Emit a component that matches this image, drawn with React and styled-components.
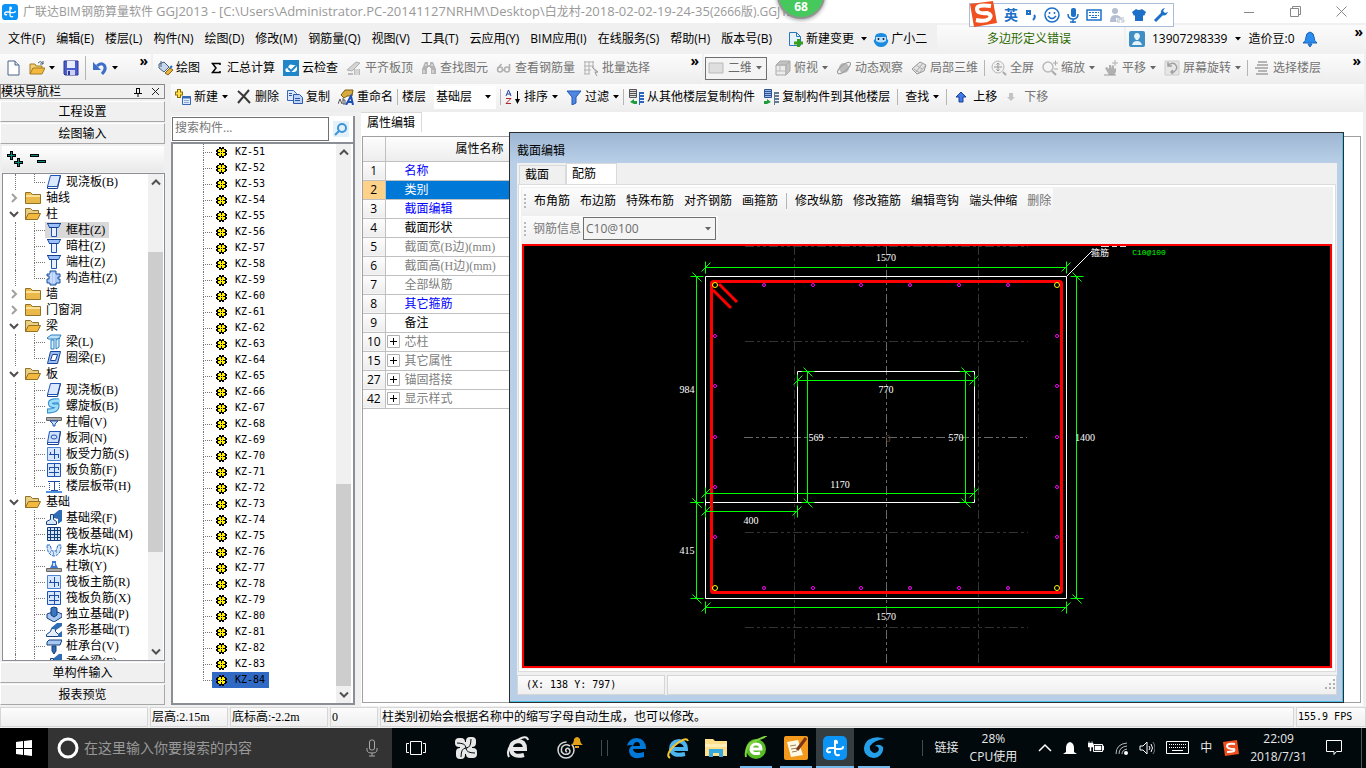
import React from 'react';
import styled, { createGlobalStyle, css } from 'styled-components';

const ui = '"Open Sans", "Noto Sans CJK SC", sans-serif';
const song = '"Liberation Serif", "Noto Sans CJK SC", serif';
const mono = '"DejaVu Sans Mono", monospace';

const GlobalStyle = createGlobalStyle`
  * {
    box-sizing: border-box;
  }
  body {
    margin: 0;
    background: #f0f0f0;
  }
  button, input, select {
    font: inherit;
    color: inherit;
    border: 0;
    padding: 0;
    margin: 0;
    background: none;
    border-radius: 0;
  }
  svg {
    display: block;
    flex: none;
  }
`;

const Page = styled.div`
  height: 100vh;
  display: flex;
  flex-direction: column;
  overflow: hidden;
  font: 12px/16px ${ui};
  color: #000;
  white-space: nowrap;
`;

/* ---------- title ---------- */

const TitleBar = styled.header`
  height: 23px;
  flex: none;
  display: flex;
  align-items: center;
  padding: 0 2px;
  background: #fff;
  color: #999;
`;

const TitleText = styled.h1`
  margin: 0 0 0 5px;
  flex: 1;
  min-width: 0;
  font: 12px/20px ${ui};
`;

const Path = styled.span`
  font-size: 13px;
`;

const WindowButton = styled.button`
  width: 46px;
  height: 22px;
  display: grid;
  place-items: center;
`;

const Ball = styled.div`
  position: absolute;
  top: -29px;
  left: 777px;
  width: 48px;
  height: 48px;
  border: 2px solid #8f958f;
  border-radius: 50%;
  background: #45c95d;
  box-shadow: 0 1px 4px #0006;
  color: #fff;
  font: bold 12px/14px ${ui};
  text-align: center;
  padding-top: 27px;
`;

const ImeBar = styled.div`
  position: absolute;
  top: 3px;
  right: 192px;
  height: 24px;
  padding: 0 4px 0 34px;
  display: flex;
  align-items: center;
  gap: 7px;
  border: 1px solid #a9bcd8;
  background: #fff;
  color: #1c70c8;
  font-weight: bold;
  font-size: 14px;
`;

const ImeLogo = styled.span`
  position: absolute;
  left: -1px;
  top: -4px;
`;

/* ---------- menu ---------- */

const MenuBar = styled.nav`
  height: 31px;
  flex: none;
  display: flex;
  align-items: center;
  background: #f0f0f0;
`;

const MenuItems = styled.div`
  display: flex;
  align-items: center;
  gap: 11px;
  padding-left: 8px;
`;

const MenuExtras = styled.div`
  display: flex;
  align-items: center;
  gap: 6px;
  padding-left: 16px;
`;

const MenuItem = styled.button`
  display: flex;
  align-items: center;
  gap: 2px;
`;

const MenuPanel = styled.div`
  height: 28px;
  flex: none;
  display: flex;
  align-items: center;
  gap: 7px;
  background: linear-gradient(#fbfbfb, #f0f0f0);
`;

const ErrorPanel = styled(MenuPanel)`
  width: 187px;
  margin-left: auto;
  margin-right: 2px;
  padding-left: 50px;
  color: #2d6a00;
`;

const AccountPanel = styled(MenuPanel)`
  width: 240px;
  padding: 0 3px 0 3px;
`;

/* ---------- tool bars ---------- */

const ToolRow = styled.div`
  flex: none;
  display: flex;
  height: 30px;
`;

const ToolGroup = styled.div`
  flex: ${({ $grow }) => ($grow ? '1' : 'none')};
  width: ${({ $width }) => ($width ? `${$width}px` : 'auto')};
  height: ${({ $height }) => $height || 30}px;
  display: flex;
  align-items: center;
  gap: 8px;
  padding: 0 3px 2px ${({ $start }) => $start || 4}px;
  margin-right: 2px;
  background: linear-gradient(#fcfcfc, #ededed);
`;

const Tool = styled.button`
  display: flex;
  align-items: center;
  gap: 3px;
  color: ${({ disabled }) => (disabled ? '#737373' : '#000')};
`;

const Separator = styled.span`
  width: 1px;
  height: ${({ $tall }) => ($tall ? 24 : 16)}px;
  flex: none;
  margin: 0 -${({ $pull }) => $pull || 2}px;
  background: #b5b5b5;
`;

const More = styled.button`
  margin-left: auto;
  align-self: flex-start;
  font: bold 14px/14px ${ui};
`;

const SelectBox = styled.label`
  display: flex;
  align-items: center;
  gap: 4px;
  width: ${({ $width }) => $width}px;
  height: 23px;
  padding: 0 4px 0 ${({ $framed }) => ($framed ? 2 : 1)}px;
  background: ${({ $framed }) => ($framed ? '#f4f4f4' : '#fff')};
  border: 1px solid ${({ $framed }) => ($framed ? '#6f6f6f' : '#fff')};
  color: ${({ $framed }) => ($framed ? '#6b6b6b' : '#000')};
  select {
    appearance: none;
    flex: 1;
    min-width: 0;
    outline: 0;
  }
`;

/* ---------- work area ---------- */

const Work = styled.main`
  flex: 1;
  min-height: 0;
  display: flex;
  gap: 6px;
`;

const NavPanel = styled.aside`
  width: 165px;
  flex: none;
  display: flex;
  flex-direction: column;
  padding-bottom: 1px;
  gap: 1px;
`;

const NavHead = styled.div`
  height: 15px;
  flex: none;
  display: flex;
  align-items: center;
  border: 1px solid #8a8a8a;
  margin-bottom: 1px;
  line-height: 13px;
  svg:first-of-type {
    margin-left: auto;
  }
  svg + svg {
    margin: 0 4px 0 8px;
  }
`;

const NavButton = styled.button`
  height: 21px;
  flex: none;
  border: 1px solid #a8a8a8;
  border-left-color: #fff;
  border-top-color: #fff;
  background: #f0f0f0;
  line-height: 18px;
`;

const NavTools = styled.div`
  height: 26px;
  flex: none;
  display: flex;
  align-items: center;
  gap: 7px;
  margin: 1px 1px 0 2px;
  padding-left: 5px;
  background: linear-gradient(#fff, #e9e9e9);
`;

const TreeBox = styled.div`
  flex: 1;
  min-height: 0;
  display: flex;
  overflow: hidden;
  margin-left: ${({ $inset }) => ($inset ? 2 : 0)}px;
  border: ${({ $inset }) => ($inset ? 1 : 2)}px solid #8b8e95;
  background: #fff;
`;

const TreeList = styled.ul`
  flex: 1;
  min-width: 0;
  overflow: hidden;
  list-style: none;
  margin: 0;
  padding: 0 0 0 ${({ $indent }) => $indent}px;
  font: 12px/16px ${song};
`;

const TreeRow = styled.li`
  height: 16px;
  display: flex;
  align-items: center;
`;

const FolderRow = styled(TreeRow)`
  gap: 5px;
  svg:first-child {
    margin: 0 1px 0 -6px;
  }
`;

const dotted = '1px dotted #777';

const Guide = styled.span`
  width: 19px;
  height: 16px;
  border-left: ${dotted};
`;

const Branch = styled.span`
  width: ${({ $width }) => $width || 11}px;
  height: 16px;
  display: flex;
  flex-direction: column;
  &::before {
    content: '';
    height: 8px;
    border-left: ${dotted};
    border-bottom: ${dotted};
  }
  &::after {
    content: '';
    height: 8px;
    border-left: ${({ $last }) => ($last ? '0' : dotted)};
  }
`;

const Leaf = styled.span`
  display: flex;
  align-items: center;
  gap: 4px;
  height: 16px;
  padding: 0 4px 0 1px;
  ${({ $selected }) =>
    $selected &&
    css`
      background: #d9d9d9;
    `}
`;

const KzLeaf = styled.span`
  display: flex;
  align-items: center;
  gap: 8px;
  height: 16px;
  padding: 0 4px;
  font: 10px/16px ${mono};
  background: ${({ $selected }) => ($selected ? '#316ac5' : 'none')};
`;

const Scroll = styled.div`
  width: 15px;
  flex: none;
  display: flex;
  flex-direction: column;
  align-items: center;
  background: #f0f0f0;
  margin-right: ${({ $gap }) => $gap || 1}px;
  svg {
    height: 17px;
  }
`;

const ScrollSpace = styled.span`
  flex: ${({ $size }) => $size};
`;

const Thumb = styled.span`
  flex: ${({ $size }) => $size};
  width: 100%;
  background: #cdcdcd;
`;

const Right = styled.div`
  flex: 1;
  min-width: 0;
  display: flex;
  flex-direction: column;
`;

const Columns = styled.div`
  flex: 1;
  min-height: 0;
  display: flex;
`;

const ListPanel = styled.section`
  width: 184px;
  flex: none;
  display: flex;
  flex-direction: column;
  margin: 4px 6px 1px 0;
`;

const SearchRow = styled.div`
  height: 26px;
  flex: none;
  display: flex;
  align-items: center;
  background: #fff;
  border-right: 2px solid #8b8e95;
  button {
    margin: 0 auto;
  }
`;

const SearchInput = styled.input`
  width: 157px;
  height: 24px;
  margin-left: 1px;
  padding: 0 2px 4px;
  border: 1px solid #707070;
  &::placeholder {
    color: #777;
    opacity: 1;
  }
`;

const PropPanel = styled.section`
  position: relative;
  flex: 1;
  min-width: 0;
  display: flex;
  flex-direction: column;
  background: #fff;
  margin-right: 3px;
`;

const PropTab = styled.button`
  width: 61px;
  height: 20px;
  border-right: 1px solid #d9d9d9;
  border-top: 1px solid #d9d9d9;
`;

const GridBox = styled.div`
  flex: 1;
  margin: 4px 2px 3px 1px;
  border: 1px solid #a0a0a0;
  min-height: 0;
`;

const PropTable = styled.table`
  border-collapse: collapse;
  table-layout: fixed;
  width: 420px;
  font: 12px/16px ${song};
  th,
  td {
    padding: 0;
    border: 1px solid #c0c0c0;
    border-left: 0;
    border-top: 0;
    text-align: left;
    font-weight: normal;
  }
`;

const HeadCell = styled.th`
  height: 24px;
  background: linear-gradient(#fdfdfd, #ededed);
  && {
    text-align: right;
    padding-right: 5px;
  }
`;

const NumberCell = styled.th`
  height: 19px;
  font-family: ${ui};
  background: ${({ $active }) => ($active ? '#ffd28a' : 'linear-gradient(#fdfdfd, #ededed)')};
  && {
    text-align: center;
  }
`;

const NameCell = styled.td`
  color: ${({ $tone }) => $tone};
  background: ${({ $active }) => ($active ? '#0078d7' : '#fff')};
`;

const NameInner = styled.div`
  display: flex;
  align-items: center;
  gap: 5px;
  height: 18px;
  padding-left: ${({ $plus }) => ($plus ? 1 : 19)}px;
`;

/* ---------- section dialog ---------- */

const Dialog = styled.section`
  position: absolute;
  inset: 20px 19px 3px 148px;
  display: flex;
  flex-direction: column;
  padding: 0 6px 7px 7px;
  border: 1px solid #2e2e2e;
  background: linear-gradient(#9db6d2, #b9cfe8 30px);
  box-shadow: inset -1px -1px #4cc3e8;
`;

const DialogTitle = styled.h2`
  margin: 0;
  height: 30px;
  flex: none;
  font: 12px/36px ${ui};
`;

const DialogBody = styled.div`
  flex: 1;
  min-height: 0;
  display: flex;
  flex-direction: column;
  background: #f0f0f0;
`;

const Tabs = styled.div`
  height: 21px;
  flex: none;
  display: flex;
  align-items: flex-end;
  padding-left: 2px;
`;

const Tab = styled.button`
  width: ${({ $on }) => ($on ? 51 : 47)}px;
  height: ${({ $on }) => ($on ? 21 : 19)}px;
  padding: 0 0 1px 5px;
  text-align: left;
  border: 1px solid #d9d9d9;
  border-bottom: 0;
  background: ${({ $on }) => ($on ? '#fff' : '#f0f0f0')};
`;

const TabPage = styled.div`
  flex: 1;
  min-height: 0;
  display: flex;
  flex-direction: column;
  margin: 0 1px;
  padding: 3px;
  border: 1px solid #dcdcdc;
  background: #f0f0f0;
  box-shadow: inset 2px 2px #fff, inset -2px -2px #fff;
`;

const DialogTools = styled.div`
  height: 28px;
  flex: none;
  display: flex;
  align-items: center;
  align-self: flex-start;
  gap: ${({ $tight }) => ($tight ? 2 : 10)}px;
  padding: ${({ $tight }) => ($tight ? '0 2px 3px' : '0 2px 3px')};
  background: linear-gradient(#fcfcfc, #efefef);
  color: ${({ $tight }) => ($tight ? '#7a7a7a' : '#000')};
`;

const Grip = styled.span`
  width: 2px;
  height: 14px;
  margin-right: ${({ $tight }) => ($tight ? 5 : -2)}px;
  background: repeating-linear-gradient(#b8b8b8 0 2px, transparent 2px 4px);
`;

const Canvas = styled.div`
  flex: 1;
  min-height: 0;
  background: #000;
  border: 2px solid #f00;
  svg {
    width: 100%;
    height: 100%;
  }
`;

const DialogStatus = styled.div`
  height: 20px;
  flex: none;
  display: flex;
  gap: 2px;
  margin-top: 3px;
`;

const StatusCell = styled.span`
  flex: ${({ $width }) => ($width ? 'none' : '1')};
  width: ${({ $width }) => ($width ? `${$width}px` : 'auto')};
  height: 20px;
  padding-left: ${({ $pad }) => $pad || 1}px;
  border: 1px solid #d6d6d6;
  background: linear-gradient(#fcfcfc, #efefef);
  font: 12px/18px ${song};
  display: flex;
  justify-content: space-between;
  align-items: center;
`;

const Mono = styled.span`
  font: 10px/16px ${mono};
`;

const StatusBar = styled.footer`
  height: 22px;
  flex: none;
  display: flex;
  gap: 2px;
  padding: 1px 0;
`;

/* ---------- taskbar ---------- */

const TaskBar = styled.footer`
  height: 40px;
  flex: none;
  display: flex;
  background: #01090c;
  color: #e8e8e8;
`;

const Start = styled.button`
  width: 48px;
  display: grid;
  place-items: center;
  background: #000;
`;

const Cortana = styled.label`
  width: 344px;
  display: flex;
  align-items: center;
  gap: 4px;
  padding: 0 14px 0 8px;
  background: #333;
  font-size: 14px;
  input {
    flex: 1;
    min-width: 0;
    outline: 0;
    &::placeholder {
      color: #999;
      opacity: 1;
    }
  }
`;

const Launchers = styled.div`
  display: flex;
  padding-left: 4px;
`;

const Launcher = styled.button`
  width: ${({ $width }) => $width || 40}px;
  display: grid;
  place-items: center;
  background: ${({ $active }) => ($active ? '#363d40' : 'none')};
  box-shadow: ${({ $running }) => ($running ? 'inset 0 -2px #76b9ed' : 'none')};
  border: 0 solid transparent;
  border-width: 0 ${({ $active }) => ($active ? 0 : 4)}px;
  background-clip: padding-box;
`;

const TaskSeparator = styled.span`
  width: 1px;
  height: 16px;
  align-self: center;
  margin: 0 ${({ $gap }) => $gap}px;
  background: #444b4e;
`;

const Tray = styled.div`
  flex: 1;
  display: flex;
  align-items: center;
  justify-content: flex-end;
  gap: 11px;
  padding-right: 4px;
`;

const TrayText = styled.div`
  text-align: center;
  font: 12px/18px ${ui};
`;

const Edge = styled.span`
  width: 1px;
  height: 40px;
  margin-left: 8px;
  background: #555;
`;

/* ---------- drawings ---------- */

const Svg = ({ w = 16, h = w, box, children }) => (
  <svg width={w} height={h} viewBox={box || `0 0 ${w} ${h}`} fill="none" aria-hidden="true">
    {children}
  </svg>
);

const Caret = ({ color = '#000' }) => (
  <Svg w={7} h={4}>
    <path d="M1 0h6L4 3.500z" fill={color} />
  </Svg>
);

const Chevron = ({ dir }) => {
  const d = { up: 'M1 7l4-4 4 4', down: 'M1 3l4 4 4-4', right: 'M3 1l4 4-4 4' };
  return (
    <Svg w={10} box="0 0 10 10">
      <path d={d[dir]} stroke={dir === 'right' ? '#a0a0a0' : '#505050'} strokeWidth="2" />
    </Svg>
  );
};

const Clover = ({ size }) => (
  <Svg w={size} box="0 0 24 24">
    <rect width="24" height="24" rx="5" fill="#0b93f6" />
    <path
      d="M14 7q0-3-2-2v11q0 4 4 3M12 12H7q-3 0-3 3 1 2 3 1M12 13h5q3 0 3-2"
      stroke="#fff"
      strokeWidth="2"
      strokeLinecap="round"
    />
  </Svg>
);

const icons = {
  doc: (
    <>
      <path d="M3 1h7l4 4v10H3z" fill="#fff" stroke="#4b6488" />
      <path d="M10 1v4h4" stroke="#4b6488" fill="#cfdcf0" />
    </>
  ),
  open: (
    <>
      <path d="M1 14V4h5l1 2h6v2" fill="#f3cf74" stroke="#a57c20" />
      <path d="M1 14l3-6h12l-3 6z" fill="#f2b93c" stroke="#a57c20" />
      <path d="M9 3q3-3 5 1m0-3v3h-3" stroke="#44607f" />
    </>
  ),
  save: (
    <>
      <path d="M1 1h14v14H2l-1-1z" fill="#4c5ecb" stroke="#2b3796" />
      <path d="M4 1h8v7H4z" fill="#e8ecff" />
      <path d="M4 10h8v5H4z" fill="#cdd2f0" />
      <path d="M5 11h2v4H5z" fill="#2b3796" />
    </>
  ),
  undo: (
    <>
      <path d="M5 6q4-4 7-1 3 4-2 9" stroke="#3d6ec9" strokeWidth="3" />
      <path d="M1 2v8h8z" fill="#3d6ec9" />
    </>
  ),
  paint: (
    <>
      <path d="M2 4l5-2 5 5-5 5-5-4z" fill="#c7d7ec" stroke="#47607e" />
      <path d="M4 1v6" stroke="#47607e" />
      <path d="M8 13l5-5 3 2-5 5z" fill="#e7b53c" stroke="#86631a" />
      <path d="M13 8l2-2" stroke="#2c6ac4" strokeWidth="2" />
    </>
  ),
  sigma: <path d="M12 5V3.500H4.500L8 8l-3.500 4.500H12V11" stroke="#000" strokeWidth="1.500" />,
  cloud: (
    <>
      <rect width="16" height="16" fill="#1f87c9" />
      <path d="M3 12q-2-4 2-4 1-5 5-3 5 0 4 5-1 2-3 2z" fill="#fff" />
      <path d="M5 8l3 3 5-5" stroke="#1f87c9" strokeWidth="2" />
    </>
  ),
  align: (
    <>
      <path d="M1 10l9-8 4 1-8 8z" fill="#d4d4d4" stroke="#b0b0b0" />
      <path d="M2 13h5v2H2zM8 9h6v6H8z" fill="#bbb" />
      <path d="M10 9v6m2-6v6" stroke="#eee" />
    </>
  ),
  binoculars: (
    <>
      <path d="M1 9l3-7h3v6H6v6H1zM15 9l-3-7H9v6h1v6h5z" fill="#b4b4b4" />
      <path d="M3 10v3m9-3v3M5 4v2m6-2v2" stroke="#efefef" />
      <path d="M6 6h4" stroke="#b4b4b4" strokeWidth="2" />
    </>
  ),
  glasses: (
    <g stroke="#b0b0b0" strokeWidth="1.500">
      <circle cx="4" cy="9.500" r="2.500" />
      <circle cx="11" cy="9.500" r="2.500" />
      <path d="M1.500 9l4-5m8 6V4M6 10h3" />
    </g>
  ),
  batch: (
    <>
      <path d="M1 2h10M1 6h10M1 10h7M2 1v13M6 1v13M10 1v7M1 14h6" stroke="#b0b0b0" />
      <path d="M9 7l6 5-3 .500L14 16" fill="#ccc" stroke="#999" />
    </>
  ),
  plane: <path d="M1 3h14v10H1z" fill="#dedede" stroke="#bbb" />,
  cube: (
    <>
      <path d="M1 5h10v10H1z" fill="#ececec" stroke="#aaa" />
      <path d="M1 5l4-4h10l-4 4zM11 5l4-4v10l-4 4z" fill="#c2c2c2" stroke="#aaa" />
      <path d="M5 5v6H1m4 0h6" stroke="#bbb" />
    </>
  ),
  orbit: (
    <>
      <circle cx="8" cy="8" r="5" fill="#bbb" />
      <ellipse cx="8" cy="8" rx="8" ry="3" transform="rotate(-40 8 8)" stroke="#9b9b9b" />
    </>
  ),
  local3d: (
    <>
      <path d="M1 9l8-7 6 3-2 6-7 3z" fill="#e3e3e3" stroke="#999" />
      <path d="M5 5l6 4m-8 0l6 4m3-10l-7 9m10-7l-7 8" stroke="#aaa" />
    </>
  ),
  full: (
    <>
      <circle cx="7" cy="7" r="6" stroke="#b8b8b8" fill="#f0f0f0" />
      <path d="M7 3v8M3 7h8M5.500 4.500L7 3l1.500 1.500M5.500 9.500L7 11l1.500-1.500" stroke="#999" />
      <path d="M12 12l3 3" stroke="#aaa" strokeWidth="2" />
    </>
  ),
  zoomer: (
    <>
      <circle cx="6" cy="7" r="5" stroke="#bababa" strokeWidth="1.500" />
      <path d="M10 11l4 4" stroke="#aaa" strokeWidth="2" />
      <path d="M11 3h5m-2.500-2.500v5M12 9h4" stroke="#aaa" />
    </>
  ),
  hand: (
    <>
      <path d="M2 8l2-1 2 2V5h2v4l1-4 2 1v3l2-1v4l-2 3H6z" fill="#b0b0b0" />
      <path d="M12 0v6M9 3h6" stroke="#b0b0b0" />
      <path d="M1 15h12" stroke="#999" />
    </>
  ),
  rotate: (
    <>
      <path d="M1 1h14v14H1z" fill="#e6e6e6" stroke="#ccc" />
      <path d="M4 6q3-4 7-2 4 4-1 8H7M4 2v4h4M9 10l-2 2 2 2" stroke="#a0a0a0" strokeWidth="1.500" />
    </>
  ),
  floors: <path d="M4 2h9M3 5h11M1 8h5M6 8h8M4 11h9M2 14h12" stroke="#b4b4b4" strokeWidth="2" />,
  create: (
    <>
      <path d="M7.500 7.500h8v8h-8z" fill="#dfeafa" stroke="#3567b5" />
      <path d="M7 8.500h9" stroke="#3567b5" strokeWidth="2" />
      <path d="M9 11.500h5m-5 2h5" stroke="#8aa9db" />
      <path d="M4 0v9M0 4.500h8" stroke="#8b6d00" strokeWidth="4" />
      <path d="M4 1v7M1 4.500h6" stroke="#ffe04c" strokeWidth="2" />
    </>
  ),
  cross: <path d="M2 2q6 5 12 12M13 1L2 14" stroke="#3a3a3a" strokeWidth="2" />,
  copy: (
    <>
      <path d="M.500 1.500h6l3 3v7h-9z" fill="#dce8fb" stroke="#3b68b6" />
      <path d="M6.500 5.500h6l3 3v6h-9z" fill="#bcd2f6" stroke="#2b57a6" />
      <path d="M2 4.500h3M2 6.500h3M8 9.500h5m-5 2h5" stroke="#2b57a6" />
    </>
  ),
  rename: (
    <>
      <path d="M3 6l4-5h8l-1 6H9L6 9z" fill="#d8ab3e" stroke="#7c5c12" />
      <path d="M0 15l2-5 2 5m1-6v6h2v-4H5" stroke="#555" />
      <path d="M8 16l5-9 2 9m-5-3h5" stroke="#1f4fb8" strokeWidth="2" />
    </>
  ),
  sort: (
    <>
      <path d="M1 7l2.500-6L6 7M2 5h4" stroke="#2447a8" />
      <path d="M1 9.500h5L1 14.500h5" stroke="#b02828" />
      <path d="M12.500 2v11" stroke="#000" />
      <path d="M10 10h5l-2.500 5z" fill="#000" />
    </>
  ),
  filter: <path d="M1 2h14L10 8v6l-4 2V8z" fill="#4f87e0" stroke="#2359b3" />,
  copyFrom: (
    <>
      <path d="M1.500.500h7v8h-7z" fill="#ddd" stroke="#555" />
      <path d="M2 2.500h6M2 4.500h6M2 6.500h6" stroke="#555" />
      <path d="M11 4h5M11 7h5M11 10h5M11 13h5" stroke="#2b66bd" strokeWidth="2" />
      <path d="M11.500 3v13" stroke="#2b66bd" />
      <path d="M2 13l4-3v2h3v3H6z" fill="#1c9c3b" />
    </>
  ),
  copyTo: (
    <>
      <path d="M1.500.500h7v8h-7z" fill="#9fbce8" stroke="#2c5394" />
      <path d="M2 2.500h6M2 4.500h6M2 6.500h6" stroke="#2c5394" />
      <path d="M11 4h5M11 7h5M11 10h5M11 13h5" stroke="#62788f" strokeWidth="2" />
      <path d="M11.500 3v13" stroke="#62788f" />
      <path d="M8 13l-4-3v2H1v3h3z" fill="#1c9c3b" />
    </>
  ),
  up: <path d="M7 3l5 5H9v5H5V8H2z" fill="#3f78e8" stroke="#1c3f94" />,
  down: <path d="M6 12l4-4H8V4H4v4H2z" fill="#c4c4c4" />,
  change: (
    <>
      <path d="M1.500 1.500h7l4 4v9h-11z" fill="#e6f2fc" stroke="#2c78bd" />
      <path d="M8.500 1.500v4h4" stroke="#2c78bd" />
      <path d="M10.500 8v8M6 12h9" stroke="#35a01e" strokeWidth="3" />
    </>
  ),
  mascot: (
    <>
      <path d="M8 2q7 0 6 6 2 1 1 3-2 5-7 5t-7-5q-1-2 1-3-1-6 6-6z" fill="#1a8be0" />
      <path d="M3 6h10v4q-5 3-10 0z" fill="#bfe2fa" />
      <path d="M5.500 7v2m5-2v2" stroke="#124" strokeWidth="1.500" />
    </>
  ),
  search: (
    <>
      <rect width="16" height="16" fill="#e4f1fb" />
      <circle cx="9" cy="7" r="4" stroke="#3d94d6" strokeWidth="2" />
      <path d="M6 10l-4 4" stroke="#3d94d6" strokeWidth="2" />
    </>
  ),
  folder: (
    <>
      <path d="M.500 2.500h5l2 2h8v9H.500z" fill="#e9b94a" stroke="#937125" />
      <path d="M1 5h14v2H1z" fill="#fbe09a" />
    </>
  ),
  folderOpen: (
    <>
      <path d="M.500 13.500v-11h5l2 2h6v3" fill="#e9cf86" stroke="#937125" />
      <path d="M.500 13.500l3-6h12l-3 6z" fill="#f3b93f" stroke="#937125" />
    </>
  ),
  slab: (
    <>
      <path d="M4.500 1.500h10l-3 11h-10z" fill="#dbe8ff" stroke="#1d54b5" />
      <path d="M1.500 12.500v2h10l3-13" stroke="#17408c" />
    </>
  ),
  column: (
    <>
      <path d="M1.500 1.500h13l-2 4h-9z" fill="#9cc0fa" stroke="#1d54b5" />
      <path d="M5.500 5.500h5v9h-5z" fill="#e6f0ff" stroke="#1d54b5" />
      <path d="M1 1.500h14M3 5.500h9" stroke="#17408c" />
    </>
  ),
  structural: (
    <>
      <path d="M4 1h6v3h4v3h-2v2h2v4h-4v2H4v-2H1V9h2V6H1V4h3z" fill="#a9c8fb" stroke="#1d4e99" />
      <path d="M5 3v10m3-10v10" stroke="#eaf2ff" />
    </>
  ),
  beam: (
    <>
      <path d="M1 4l4-3h10l-2 4H2z" fill="#bfe3fb" stroke="#2a7fc0" />
      <path d="M5 6h3v9H5zM10 6l3-2v9l-3 2z" fill="#d9f0ff" stroke="#2a7fc0" />
    </>
  ),
  ring: (
    <>
      <path d="M4.500 1.500h10l-3 12h-10z" fill="#9dbdf0" stroke="#17439a" />
      <path d="M6.500 4.500h5l-2 6h-5z" fill="#fff" stroke="#17439a" />
    </>
  ),
  spiral: (
    <>
      <path d="M13 3Q2 2 5 7q2 1 6 1 0 5-10 5" stroke="#2f8fd0" strokeWidth="5" />
      <path d="M14 3Q2 2 5 7q2 1 6 1 0 5-9 5" stroke="#9fdcfa" strokeWidth="3" />
    </>
  ),
  cap: (
    <>
      <path d="M.500 3.500h15v3H.500z" fill="#aaa" stroke="#666" />
      <path d="M4 7h8l-3 3v2H7v-2z" fill="#d5e5ff" stroke="#1d54b5" />
    </>
  ),
  hole: (
    <>
      <path d="M3.500 1.500h11l-2 11h-11z" fill="#cfe0ff" stroke="#1d54b5" />
      <path d="M1.500 12.500v2h11l2-13" stroke="#17408c" />
      <ellipse cx="8" cy="7" rx="3" ry="2" stroke="#1d54b5" />
    </>
  ),
  bar: (
    <>
      <path d="M1.500 1.500h13v13h-13z" fill="#d7e7ff" stroke="#4f83d4" />
      <path d="M3 8.500h10M8.500 3v10M4.500 6v3M12.500 8v4" stroke="#1d4ea5" />
    </>
  ),
  bar2: (
    <>
      <path d="M1.500 1.500h13v13h-13z" fill="#d7e7ff" stroke="#1d54b5" />
      <path d="M3 5.500h10M3 10.500h10M8.500 2v12M3.500 5v3M12.500 5v3" stroke="#1d4ea5" />
    </>
  ),
  strip: (
    <>
      <path d="M0 13h16v2H0z" fill="#4f8fe0" />
      <path d="M2 3.500h12M8.500 4v8M5 12.500h7" stroke="#1d4ea5" />
      <path d="M3.500 3v10m10-10v10" stroke="#1d4ea5" strokeDasharray="1 1" />
    </>
  ),
  foundBeam: (
    <>
      <path d="M.500 14.500v-3l4-2v-5h3v5l3 2v3z" fill="#d7e7fa" stroke="#153f7a" />
      <path d="M8 4l5-4h3v11l-4 3V9L8 8z" fill="#2f6cb6" />
    </>
  ),
  raft: (
    <path
      d="M1.500 1.500h13v13h-13zM4.500 4.500h7v7h-7zM1 4.500h14M1 8.500h14M1 11.500h14M4.500 1v14M8.500 1v14M11.500 1v14"
      fill="#cfe3f7"
      stroke="#123c7a"
    />
  ),
  pit: (
    <>
      <path d="M1 3h3l2 6h4l2-6h3q0 10-7 11Q1 13 1 3z" fill="#d5e6fb" stroke="#2b6bc0" strokeDasharray="3 1" />
      <path d="M4 10h1m2 1h1m2-1h1m-4 2h1" stroke="#2b6bc0" />
    </>
  ),
  pier: (
    <>
      <path d="M.500 10.500h15v3H.500z" fill="#aaa" stroke="#666" />
      <path d="M4 10l2-4V3h4v3l2 4z" fill="#3c78d4" />
      <path d="M7 5h2v3H7z" fill="#cfe0ff" />
    </>
  ),
  isolated: (
    <>
      <path d="M1 8l8-3 7 3v3l-8 5-7-4z" fill="#a7c8f2" stroke="#153f7a" />
      <path d="M5 2l3-1 3 1v7l-3 2-3-2z" fill="#3b77c0" stroke="#153f7a" />
    </>
  ),
  stripFound: (
    <>
      <path d="M.500 14.500v-2l4-3 1-3h4v3l3 3v2z" fill="#e2eefc" stroke="#153f7a" />
      <path d="M5 6l6-5h5v3l-6 4zM12 12l4-3v6h-3z" fill="#2f6cb6" />
    </>
  ),
  pile: (
    <>
      <path d="M1 4l2-2h13l-2 5H1z" fill="#a7c8f2" stroke="#153f7a" />
      <path d="M6 8h4v5l-2 3-2-3z" fill="#2f6cb6" stroke="#153f7a" />
    </>
  ),
  gear: (
    <>
      <path
        d="M3 0h2v1h1V0h2v2h2v1h1v2h-1v1h1v2h-1v1H8v2H6v-1H5v1H3V9H1V8H0V6h1V5H0V3h1V2h2z"
        fill="#000"
      />
      <path d="M2 3h7v5H2zM3 2h5v7H3z" fill="#fff200" />
      <path d="M2 5.500h7M5.500 2v7" stroke="#000" />
      <path d="M4 4h3v3H4z" fill="#fff200" />
      <path d="M5 5h1v1H5z" fill="#000" />
    </>
  ),
  person: (
    <>
      <rect width="16" height="16" rx="2" fill="#3f8fc4" />
      <path d="M5 6q0-4 3-4t3 4l-2 3h-2zM3 14q1-4 5-4t5 4z" fill="#e5f3fb" />
    </>
  ),
  blueBell: <path d="M8 1q4 1 4 5 0 4 3 6H1q3-2 3-6 0-4 4-5zM6 13h4l-2 3z" fill="#2b8cf0" stroke="#1263b8" />,
};

const Icon = ({ name, size = 16 }) => (
  <Svg w={size} h={size} box={name === 'gear' ? '0 0 11 11' : '0 0 16 16'}>
    {icons[name]}
  </Svg>
);

/* dimension lines of the section drawing */
const DimH = ({ x1, x2, y }) => (
  <path
    d={`M${x1} ${y}H${x2}M${x1} ${y - 6}v12M${x2} ${y - 6}v12M${x1 - 4} ${y + 4}l9-9M${x2 - 5} ${y + 4}l9-9`}
  />
);

const DimV = ({ x, y1, y2 }) => (
  <path
    d={`M${x} ${y1}V${y2}M${x - 6} ${y1}h13M${x - 6} ${y2}h13M${x - 4} ${y1 - 4}l9 9M${x - 4} ${y2 - 4}l9 9`}
  />
);

const labels = [
  [886, 261, '1570'],
  [886, 393, '770'],
  [687, 393, '984'],
  [687, 554, '415'],
  [816, 441, '569'],
  [956, 441, '570'],
  [1085, 441, '1400'],
  [840, 488, '1170'],
  [751, 524, '400'],
  [886, 620, '1570'],
];

const SectionDrawing = () => {
  const dots = [];
  [764, 813, 861, 910, 959, 1008].forEach((x) => dots.push([x, 285], [x, 588]));
  [336, 386, 437, 487, 537].forEach((y) => dots.push([715, y], [1057, y]));
  const corners = [[715, 285], [1057, 285], [715, 588], [1057, 588]];

  return (
    <svg viewBox="524 246 806 420" fill="none" role="img" aria-label="截面配筋图">
      <g strokeDasharray="9 3 3 3 3 3" stroke="#333">
        <path d="M794.500 246v420M978.500 246v420M745 246.500h283M745 341.500h283M745 532.500h283M745 627.500h283" />
        <path d="M886.500 246v420M744 437.500h283" stroke="#696969" />
      </g>
      <path
        d="M705.500 276.500h361v322h-361zM797.500 502.500v-131h177v131M705.500 502.500h269M1067 276l25-25"
        stroke="#fff"
      />
      <rect x="711.500" y="281.500" width="350" height="311" rx="2" stroke="#f00" strokeWidth="3" />
      <path d="M713 290l18 18M719 284l18 18" stroke="#f00" strokeWidth="3" />
      <g stroke="#0f0">
        <DimH x1={705.5} x2={1066.5} y={267.5} />
        <DimH x1={705.5} x2={1066.5} y={607.5} />
        <DimH x1={797.5} x2={974.5} y={380.5} />
        <DimH x1={705.5} x2={974.5} y={493.5} />
        <DimH x1={705.5} x2={797.5} y={511.5} />
        <DimV x={696.5} y1={276.5} y2={502.5} />
        <DimV x={696.5} y1={502.5} y2={598.5} />
        <DimV x={1076.5} y1={276.5} y2={598.5} />
        <DimV x={807.5} y1={371.5} y2={502.5} />
        <DimV x={965.5} y1={371.5} y2={502.5} />
      </g>
      {dots.map(([x, y]) => (
        <circle key={`${x}-${y}`} cx={x} cy={y} r="1.500" stroke="#f0f" />
      ))}
      {corners.map(([x, y]) => (
        <circle key={`${x}-${y}`} cx={x} cy={y} r="2.500" stroke="#ff0" />
      ))}
      <g fill="#fff" fontFamily="Liberation Serif" fontSize="10" textAnchor="middle">
        {labels.map(([x, y, text]) => (
          <text key={`${x}-${y}`} x={x} y={y}>
            {text}
          </text>
        ))}
        <text x="888" y="442" fill="#5a4a3a">
          0
        </text>
        <text x="1100" y="256" fontFamily="Noto Sans CJK SC" fontSize="9">
          箍筋
        </text>
        <text x="1149" y="255" fill="#0f0" fontFamily="Liberation Mono" fontSize="8">
          C10@100
        </text>
      </g>
      <path d="M1101 246.500h8m3 0h5m3 0h6" stroke="#ddd" />
    </svg>
  );
};

/* ---------- data ---------- */

const menus = [
  '文件(F)', '编辑(E)', '楼层(L)', '构件(N)', '绘图(D)', '修改(M)', '钢筋量(Q)', '视图(V)',
  '工具(T)', '云应用(Y)', 'BIM应用(I)', '在线服务(S)', '帮助(H)', '版本号(B)',
];

const tree = [
  ['slab', '现浇板(B)', 'last'],
  ['closed', '轴线'],
  ['open', '柱'],
  ['column', '框柱(Z)', 'selected'],
  ['column', '暗柱(Z)'],
  ['column', '端柱(Z)'],
  ['structural', '构造柱(Z)', 'last'],
  ['closed', '墙'],
  ['closed', '门窗洞'],
  ['open', '梁'],
  ['beam', '梁(L)'],
  ['ring', '圈梁(E)', 'last'],
  ['open', '板'],
  ['slab', '现浇板(B)'],
  ['spiral', '螺旋板(B)'],
  ['cap', '柱帽(V)'],
  ['hole', '板洞(N)'],
  ['bar', '板受力筋(S)'],
  ['bar2', '板负筋(F)'],
  ['strip', '楼层板带(H)', 'last'],
  ['open', '基础'],
  ['foundBeam', '基础梁(F)'],
  ['raft', '筏板基础(M)'],
  ['pit', '集水坑(K)'],
  ['pier', '柱墩(Y)'],
  ['bar', '筏板主筋(R)'],
  ['bar2', '筏板负筋(X)'],
  ['isolated', '独立基础(P)'],
  ['stripFound', '条形基础(T)'],
  ['pile', '桩承台(V)'],
  ['foundBeam', '承台梁(F)'],
];

const columns = Array.from({ length: 34 }, (_, i) => 51 + i);

const properties = [
  [1, '名称', '#0000ff'],
  [2, '类别', '#ffffff'],
  [3, '截面编辑', '#0000ff'],
  [4, '截面形状', '#000000'],
  [5, '截面宽(B边)(mm)', '#808080'],
  [6, '截面高(H边)(mm)', '#808080'],
  [7, '全部纵筋', '#808080'],
  [8, '其它箍筋', '#0000ff'],
  [9, '备注', '#000000'],
  [10, '芯柱', '#808080'],
  [15, '其它属性', '#808080'],
  [27, '锚固搭接', '#808080'],
  [42, '显示样式', '#808080'],
];

const ToolButton = ({ icon, label, caret, disabled }) => (
  <Tool disabled={disabled} aria-label={label || icon}>
    {icon && <Icon name={icon} />}
    {label}
    {caret && <Caret color={disabled ? '#666' : '#000'} />}
  </Tool>
);

const Scrollbar = ({ before, thumb, after, gap }) => (
  <Scroll $gap={gap}>
    <Chevron dir="up" />
    <ScrollSpace $size={before} />
    <Thumb $size={thumb} />
    <ScrollSpace $size={after} />
    <Chevron dir="down" />
  </Scroll>
);

const NavTree = () => (
  <TreeBox $inset>
    <TreeList $indent={12}>
      {tree.map(([kind, label, mark], i) =>
        kind === 'open' || kind === 'closed' ? (
          <FolderRow key={i}>
            <Chevron dir={kind === 'open' ? 'down' : 'right'} />
            <Icon name={kind === 'open' ? 'folderOpen' : 'folder'} />
            {label}
          </FolderRow>
        ) : (
          <TreeRow key={i}>
            <Guide />
            <Branch $last={mark === 'last'} />
            <Leaf $selected={mark === 'selected'}>
              <Icon name={kind} />
              {label}
            </Leaf>
          </TreeRow>
        )
      )}
    </TreeList>
    <Scrollbar before={61} thumb={300} after={91} />
  </TreeBox>
);

const SectionDialog = () => (
  <Dialog role="dialog" aria-label="截面编辑">
    <DialogTitle>截面编辑</DialogTitle>
    <DialogBody>
      <Tabs role="tablist">
        <Tab role="tab">截面</Tab>
        <Tab role="tab" $on>
          配筋
        </Tab>
      </Tabs>
      <TabPage>
        <DialogTools>
          <Grip />
          {['布角筋', '布边筋', '特殊布筋', '对齐钢筋', '画箍筋'].map((label) => (
            <Tool key={label}>{label}</Tool>
          ))}
          <Separator />
          {['修改纵筋', '修改箍筋', '编辑弯钩', '端头伸缩'].map((label) => (
            <Tool key={label}>{label}</Tool>
          ))}
          <Tool disabled>删除</Tool>
        </DialogTools>
        <DialogTools $tight>
          <Grip $tight />
          <span>钢筋信息</span>
          <SelectBox $framed $width={133}>
            <select aria-label="钢筋信息">
              <option>C10@100</option>
            </select>
            <Caret color="#666" />
          </SelectBox>
        </DialogTools>
        <Canvas>
          <SectionDrawing />
        </Canvas>
      </TabPage>
      <DialogStatus>
        <StatusCell $width={148} $pad={8}>
          <Mono>(X: 138 Y: 797)</Mono>
        </StatusCell>
        <StatusCell>
          <span />
          <Svg w={12}>
            <path d="M9 1h2M5 5h2M9 5h2M1 9h2M5 9h2M9 9h2" stroke="#b0b0b0" strokeWidth="2" />
          </Svg>
        </StatusCell>
      </DialogStatus>
    </DialogBody>
  </Dialog>
);

const App = () => (
  <Page>
    <GlobalStyle />
    <TitleBar>
      <Clover size={16} />
      <TitleText>
        广联达BIM钢筋算量软件 <Path>GGJ2013 - [C:\Users\Administrator.PC-20141127NRHM\Desktop\</Path>
        白龙村<Path>-2018-02-02-19-24-35</Path>(2666版).GGJ12]
      </TitleText>
      <WindowButton aria-label="最小化">
        <Svg w={10}>
          <path d="M0 5.500h10" stroke="#888" />
        </Svg>
      </WindowButton>
      <WindowButton aria-label="还原">
        <Svg w={11}>
          <path d="M.500 2.500h8v8h-8zM2.500 2V.500h8v8H9" stroke="#888" />
        </Svg>
      </WindowButton>
      <WindowButton aria-label="关闭">
        <Svg w={11}>
          <path d="M.500.500l10 10m0-10l-10 10" stroke="#888" />
        </Svg>
      </WindowButton>
    </TitleBar>
    <Ball>68</Ball>
    <ImeBar>
      <ImeLogo>
        <Svg w={28} box="0 0 28 28">
          <path d="M1 4L24 1l4 22-23 4z" fill="#f0501f" />
          <path d="M22 6Q8 4 8 9t10 4q6 2 2 6-4 3-13 1" stroke="#fff" strokeWidth="4" />
        </Svg>
      </ImeLogo>
      英
      <Svg w={12} h={16}>
        <path d="M2 4h3v3H2zM9 8q2 2-1 5" stroke="#1c70c8" strokeWidth="2" />
      </Svg>
      <Svg w={16}>
        <circle cx="8" cy="8" r="7" stroke="#1c70c8" strokeWidth="1.500" />
        <path d="M5.500 5v2m5-2v2M4 9q4 5 8 0" stroke="#1c70c8" strokeWidth="1.500" />
      </Svg>
      <Svg w={12} h={16}>
        <rect x="4" y="1" width="5" height="9" rx="2" fill="#1c70c8" />
        <path d="M1 7q0 5 5 5t5-5M6 12v4M3 15h6" stroke="#1c70c8" strokeWidth="1.500" />
      </Svg>
      <Svg w={16}>
        <path d="M1 3h14v10H1z" stroke="#1c70c8" strokeWidth="1.500" />
        <path d="M3 5.500h10M3 8.500h10" stroke="#1c70c8" strokeDasharray="2 1" />
        <path d="M5 10.500h6" stroke="#1c70c8" />
      </Svg>
      <Svg w={16}>
        <circle cx="6" cy="4" r="3" fill="#b5bfd2" />
        <path d="M1 15q0-7 5-7t6 3H7v4z" fill="#b5bfd2" />
        <path d="M8 11h3v2H8v2h3m4-4h-3v2h3v2h-3" stroke="#b5bfd2" />
      </Svg>
      <Svg w={14} h={16}>
        <path d="M4 2q3 2 6 0l4 3-2 4-1-1v6H3V8L2 9 0 5z" fill="#1c70c8" />
      </Svg>
      <Svg w={16}>
        <path d="M2 14l7-7" stroke="#1c70c8" strokeWidth="3" />
        <path d="M12 1q-5 1-4 6 4 4 7-2l-3 1-2-2z" fill="#1c70c8" />
      </Svg>
    </ImeBar>

    <MenuBar>
      <MenuItems>
        {menus.map((label) => (
          <MenuItem key={label}>{label}</MenuItem>
        ))}
      </MenuItems>
      <MenuExtras>
        <MenuItem>
          <Icon name="change" />
          新建变更
        </MenuItem>
        <Caret />
        <MenuItem>
          <Icon name="mascot" />
          广小二
        </MenuItem>
      </MenuExtras>
      <ErrorPanel>多边形定义错误</ErrorPanel>
      <AccountPanel>
        <Icon name="person" />
        13907298339
        <Caret />
        <span>造价豆:0</span>
        <Icon name="blueBell" />
        <More>»</More>
      </AccountPanel>
    </MenuBar>

    <ToolRow>
      <ToolGroup $start={5} $width={151}>
        <ToolButton icon="doc" />
        <ToolButton icon="open" caret />
        <ToolButton icon="save" />
        <Separator $tall />
        <ToolButton icon="undo" caret />
        <More>»</More>
      </ToolGroup>
      <ToolGroup $grow>
        <ToolButton icon="paint" label="绘图" />
        <ToolButton icon="sigma" label="汇总计算" />
        <ToolButton icon="cloud" label="云检查" />
        <ToolButton icon="align" label="平齐板顶" disabled />
        <ToolButton icon="binoculars" label="查找图元" disabled />
        <ToolButton icon="glasses" label="查看钢筋量" disabled />
        <ToolButton icon="batch" label="批量选择" disabled />
        <More>»</More>
      </ToolGroup>
      <ToolGroup $start={1} $width={660}>
        <SelectBox $framed $width={62}>
          <Icon name="plane" />
          <select aria-label="视图">
            <option>二维</option>
          </select>
          <Caret color="#666" />
        </SelectBox>
        <ToolButton icon="cube" label="俯视" caret disabled />
        <ToolButton icon="orbit" label="动态观察" disabled />
        <ToolButton icon="local3d" label="局部三维" disabled />
        <Separator />
        <ToolButton icon="full" label="全屏" disabled />
        <ToolButton icon="zoomer" label="缩放" caret disabled />
        <ToolButton icon="hand" label="平移" caret disabled />
        <ToolButton icon="rotate" label="屏幕旋转" caret disabled />
        <Separator />
        <ToolButton icon="floors" label="选择楼层" disabled />
        <More>»</More>
      </ToolGroup>
    </ToolRow>

    <Work>
      <NavPanel>
        <NavHead>
          模块导航栏
          <Svg w={10}>
            <path d="M3.500 1v5M6.500 1v5M3 1.500h4M1 6.500h8M5 6v4" stroke="#000" />
          </Svg>
          <Svg w={9}>
            <path d="M1 1l7 7m0-7l-7 7" stroke="#222" />
          </Svg>
        </NavHead>
        <NavButton>工程设置</NavButton>
        <NavButton>绘图输入</NavButton>
        <NavTools>
          <Svg w={16}>
            <path d="M4.500 0v9M0 4.500h9M11.500 7v9M7 11.500h9" stroke="#000" strokeWidth="3" />
            <path d="M4.500 1v7M1 4.500h7M11.500 8v7M8 11.500h7" stroke="#0a8c84" />
          </Svg>
          <Svg w={16}>
            <path d="M0 4.500h9M7 10.500h9" stroke="#000" strokeWidth="3" />
            <path d="M1 4.500h7M8 10.500h7" stroke="#0a8c84" />
          </Svg>
        </NavTools>
        <NavTree />
        <NavButton>单构件输入</NavButton>
        <NavButton>报表预览</NavButton>
      </NavPanel>

      <Right>
        <ToolGroup $height={28}>
          <ToolButton icon="create" label="新建" caret />
          <ToolButton icon="cross" label="删除" />
          <ToolButton icon="copy" label="复制" />
          <ToolButton icon="rename" label="重命名" />
          <Separator $pull={4} />
          <span>楼层</span>
          <SelectBox $width={62}>
            <select aria-label="楼层">
              <option>基础层</option>
            </select>
            <Caret />
          </SelectBox>
          <Separator $pull={4} />
          <ToolButton icon="sort" label="排序" caret />
          <ToolButton icon="filter" label="过滤" caret />
          <Separator $pull={4} />
          <ToolButton icon="copyFrom" label="从其他楼层复制构件" />
          <ToolButton icon="copyTo" label="复制构件到其他楼层" />
          <Separator $pull={1} />
          <ToolButton label="查找" caret />
          <Separator $pull={1} />
          <ToolButton icon="up" label="上移" />
          <ToolButton icon="down" label="下移" disabled />
        </ToolGroup>
        <Columns>
          <ListPanel>
            <SearchRow>
              <SearchInput aria-label="搜索构件" placeholder="搜索构件..." />
              <button aria-label="搜索">
                <Icon name="search" />
              </button>
            </SearchRow>
            <TreeBox>
              <TreeList $indent={30}>
                {columns.map((n) => (
                  <TreeRow key={n}>
                    <Branch $width={9} $last={n === 84} />
                    <KzLeaf $selected={n === 84}>
                      <Icon name="gear" size={11} />
                      KZ-{n}
                    </KzLeaf>
                  </TreeRow>
                ))}
              </TreeList>
              <Scrollbar before={324} thumb={202} after={0} gap={2} />
            </TreeBox>
          </ListPanel>

          <PropPanel>
            <PropTab>属性编辑</PropTab>
            <GridBox>
              <PropTable>
                <colgroup>
                  <col width="22" />
                  <col width="124" />
                  <col />
                </colgroup>
                <thead>
                  <tr>
                    <HeadCell />
                    <HeadCell>属性名称</HeadCell>
                    <HeadCell />
                  </tr>
                </thead>
                <tbody>
                  {properties.map(([n, name, tone]) => (
                    <tr key={n}>
                      <NumberCell $active={n === 2}>{n}</NumberCell>
                      <NameCell $tone={tone} $active={n === 2}>
                        <NameInner $plus={n > 9}>
                          {n > 9 && (
                            <Svg w={13}>
                              <path d="M.500.500h12v12H.500z" stroke="#b0b0b0" />
                              <path d="M3 6.500h7M6.500 3v7" stroke="#000" />
                            </Svg>
                          )}
                          {name}
                        </NameInner>
                      </NameCell>
                      <td />
                    </tr>
                  ))}
                </tbody>
              </PropTable>
            </GridBox>
            <SectionDialog />
          </PropPanel>
        </Columns>
      </Right>
    </Work>

    <StatusBar>
      <StatusCell $width={148} />
      <StatusCell $width={78}>层高:2.15m</StatusCell>
      <StatusCell $width={98}>底标高:-2.2m</StatusCell>
      <StatusCell $width={48}>0</StatusCell>
      <StatusCell>柱类别初始会根据名称中的缩写字母自动生成，也可以修改。</StatusCell>
      <StatusCell $width={70}>
        <Mono>155.9 FPS</Mono>
      </StatusCell>
    </StatusBar>

    <TaskBar>
      <Start aria-label="开始">
        <Svg w={16}>
          <path d="M0 2l7-1v7H0zM8 1l8-1v8H8zM0 9h7v6l-7-1zM8 9h8v7l-8-1z" fill="#fff" />
        </Svg>
      </Start>
      <Cortana>
        <Svg w={24}>
          <circle cx="12" cy="12" r="9" stroke="#fff" strokeWidth="3" />
        </Svg>
        <input aria-label="搜索" placeholder="在这里输入你要搜索的内容" />
        <Svg w={12} h={18}>
          <rect x="3.500" y="1" width="5" height="10" rx="2" stroke="#aaa" />
          <path d="M1 9v2q0 3 5 3t5-3V9M6 14v3M3 17h6" stroke="#aaa" />
        </Svg>
      </Cortana>
      <Launchers>
        <Launcher aria-label="任务视图">
          <Svg w={20} h={16}>
            <path d="M4.500 1.500h11v13h-11zM3 3.500H.500v9H3M17 3.500h2.500v9H17" stroke="#fff" />
          </Svg>
        </Launcher>
        <Launcher aria-label="风车" $width={60}>
          <Svg w={24}>
            <g fill="#e8e8e8">
              <rect x="1" y="2" width="10" height="9" rx="4" />
              <rect x="12" y="1" width="10" height="10" rx="4" />
              <rect x="12" y="12" width="11" height="10" rx="4" />
              <rect x="2" y="12" width="9" height="11" rx="4" />
              <path d="M6 6h12v12H6z" />
            </g>
            <path d="M12 12q0-5-9-5M12 12q5 0 5-9M12 12q0 5 9 5M12 12q-5 0-5 9" stroke="#01090c" />
          </Svg>
        </Launcher>
        <Launcher aria-label="浏览器" $width={44}>
          <Svg w={24}>
            <path d="M5 13h14q0-8-7-8-8 1-7 9 2 8 13 5" stroke="#e8e8e8" strokeWidth="4" />
            <path d="M3 21Q-1 12 10 5t12-1" stroke="#e8e8e8" strokeWidth="2" />
          </Svg>
        </Launcher>
        <Launcher aria-label="提醒" $width={60}>
          <Svg w={28} h={26}>
            <circle cx="10" cy="15" r="8" stroke="#d8d8d8" strokeDasharray="38 6" strokeWidth="1.500" />
            <path d="M14 11q-5-3-8 1-2 5 2 7 6 1 6-3-1-4-4-2-1 2 1 3" stroke="#d8d8d8" strokeWidth="1.500" />
            <path d="M15 10q3-2 3-6 3-4 6 0 0 4 3 6zM19 11h4v2h-4z" fill="#e2a21a" />
          </Svg>
        </Launcher>
        <TaskSeparator $gap={1} />
        <TaskSeparator $gap={4} />
        <Launcher aria-label="Edge" $width={48}>
          <Svg w={22}>
            <path d="M2 9Q4 1 12 1q9 1 9 11H8q1 6 11 3v5Q5 24 4 14q0-4 4-6-5 0-6 1zM8 9h7q0-4-3-4T8 9z" fill="#0078d7" />
          </Svg>
        </Launcher>
        <Launcher aria-label="Internet Explorer" $width={36}>
          <Svg w={24}>
            <path d="M6 13h14q0-7-7-8-8 1-8 8 1 8 14 5" stroke="#4cb4ee" strokeWidth="4" />
            <path d="M4 22q-5-3 4-12Q20 0 22 5" stroke="#f4c430" strokeWidth="2" />
          </Svg>
        </Launcher>
        <Launcher aria-label="文件资源管理器">
          <Svg w={22}>
            <path d="M0 2h8l2 2h12v15H0z" fill="#ffe08a" />
            <path d="M0 7h22v3H0z" fill="#ffeeb5" />
            <path d="M4 20v-8h14v8h-4v-4H8v4z" fill="#35a8e0" />
          </Svg>
        </Launcher>
        <Launcher aria-label="360浏览器" $running>
          <Svg w={24}>
            <circle cx="12" cy="13" r="10" fill="#58bb28" />
            <path d="M7 13h10q0-5-5-5t-5 6q1 5 9 3" stroke="#fff" strokeWidth="3" />
            <path d="M2 21Q0 10 11 5t11-4" stroke="#7ed63d" strokeWidth="2" />
          </Svg>
        </Launcher>
        <Launcher aria-label="便笺" $running>
          <Svg w={24}>
            <rect width="24" height="24" rx="2" fill="#f39a1d" />
            <path d="M3 6l11-2 5 15-12 2z" fill="#fff8e5" />
            <path d="M6 10l6-1m-5 4l7-1m-6 4l5-1" stroke="#9b8050" />
            <path d="M22 2l-9 12" stroke="#7b351a" strokeWidth="3" />
          </Svg>
        </Launcher>
        <Launcher aria-label="广联达" $running $active $width={38}>
          <Clover size={24} />
        </Launcher>
        <Launcher aria-label="广联达G+" $running>
          <Svg w={24}>
            <path
              d="M23 3q-9-4-17 1-6 6-3 13 5 7 13 4 6-4 5-10-4-4-8-1 3 0 4 3-1 4-5 4-5-2-4-7 4-6 15-7z"
              fill="#249fe8"
            />
          </Svg>
        </Launcher>
      </Launchers>
      <Tray>
        <TaskSeparator $gap={1} />
        <span>链接</span>
        <TrayText>
          28%
          <br />
          CPU使用
        </TrayText>
        <Svg w={24} h={16}>
          <path d="M11 11l6-6 6 6" stroke="#fff" strokeWidth="1.500" />
        </Svg>
        <Svg w={14}>
          <path d="M7 1q4 1 4 6v4l3 2H0l3-2V7q0-5 4-6zM5 14h4v2H5z" fill="#fff" />
        </Svg>
        <Svg w={16}>
          <path d="M5.500 4.500h9v7h-9z" stroke="#fff" />
          <path d="M7 6h6v4H7zM15 6h1v4h-1zM0 3h5v4H3v4H2V7H0zM1 1v2m3-2v2" fill="#fff" stroke="#fff" strokeWidth=".5" />
        </Svg>
        <Svg w={13} h={14}>
          <path d="M1 13Q1 3 12 2M4 13q0-7 8-8M7 13q0-4 5-5" stroke="#bbb" />
          <circle cx="11" cy="12" r="2" fill="#fff" />
        </Svg>
        <Svg w={16}>
          <path d="M1 6h3l4-4v12l-4-4H1z" stroke="#fff" />
          <path d="M10 6q2 2 0 4M12 4q3 4 0 8" stroke="#fff" />
          <path d="M14 2q4 6 0 12" stroke="#777" />
        </Svg>
        <Svg w={23} h={14}>
          <path d="M.500.500h22v12H.500z" stroke="#fff" />
          <path d="M3 3.500h17M3 6.500h17" stroke="#fff" strokeDasharray="1 1" />
          <path d="M6 9.500h11" stroke="#fff" />
        </Svg>
        <span>中</span>
        <Svg w={16}>
          <path d="M0 2l14-2 2 14-14 2z" fill="#f0501f" />
          <path d="M12 4Q4 3 4 6t7 3q2 3-7 3" stroke="#fff" strokeWidth="2" />
        </Svg>
        <TrayText>
          22:09
          <br />
          2018/7/31
        </TrayText>
        <Svg w={24} h={16}>
          <path d="M8.500.500h15v11h-5l-2.500 3v-3h-7.500z" stroke="#fff" />
        </Svg>
        <Edge />
      </Tray>
    </TaskBar>
  </Page>
);

export default App;
